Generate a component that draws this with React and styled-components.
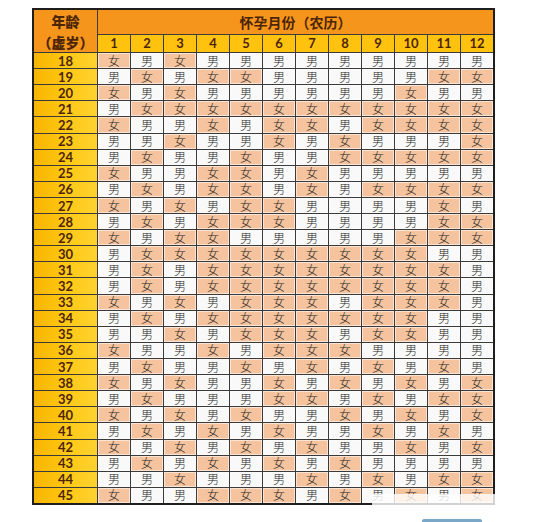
import styled, { createGlobalStyle } from "styled-components";

const GlobalStyle = createGlobalStyle`
  html, body {
    margin: 0;
    padding: 0;
    background: #ffffff;
  }
  body {
    font-family: "Noto Sans CJK SC", sans-serif;
  }
`;

const Page = styled.div`
  width: 552px;
  height: 522px;
  padding: 8px 0 0 32px;
  box-sizing: border-box;
  position: relative;
  overflow: hidden;
`;

const Grid = styled.div`
  display: grid;
  grid-template-columns: 63px repeat(12, minmax(0, 1fr));
  grid-template-rows: 24px 17px repeat(28, minmax(0, 1fr));
  width: 463px;
  height: 497px;
  box-sizing: border-box;
  gap: 1px;
  background: #3a3a3a;
  border: 2px solid #1e1e1e;
`;

const HeadCell = styled.div`
  display: flex;
  align-items: center;
  justify-content: center;
  background: ${(p) => (p.$num ? "#ffc30f" : "#f5951c")};
  color: #4d2504;
  font-family: Lato, "Noto Sans CJK SC", sans-serif;
  font-weight: 700;
  font-size: ${(p) => (p.$num ? "13px" : "14px")};
  grid-column: ${(p) => p.$col || "auto"};
  grid-row: ${(p) => p.$row || "auto"};
  line-height: 15px;
  text-align: center;
`;

const AgeHead = styled(HeadCell)`
  flex-direction: column;
  gap: 5px;
  font-family: "Noto Sans CJK SC", sans-serif;
  font-size: 14px;
  font-weight: 900;
  line-height: 16px;
`;

const AgeCell = styled.div`
  display: flex;
  align-items: center;
  justify-content: center;
  background: linear-gradient(90deg, #f7b500, #ffc814 50%, #ffd230);
  color: #4d2504;
  font-family: Lato, sans-serif;
  font-weight: 700;
  font-size: 13px;
  line-height: 14px;
`;

const Cell = styled.div`
  display: flex;
  align-items: center;
  justify-content: center;
  background: ${(p) => (p.$girl ? "#f5c39d" : "#f9f9f9")};
  box-shadow: inset 0 0 0 1px rgba(255, 255, 255, 0.55);
  color: #262626;
  font-family: "Noto Sans CJK SC", sans-serif;
  font-weight: 300;
  font-size: 12px;
  line-height: 14px;
`;

const Watermark = styled.div`
  position: absolute;
  left: 372px;
  top: 494px;
  width: 128px;
  height: 16px;
  background: rgba(255, 255, 255, 0.8);
`;

const BlueMark = styled.div`
  position: absolute;
  left: 422px;
  top: 519px;
  width: 60px;
  height: 3px;
  background: #7aa6c8;
  border-radius: 2px 2px 0 0;
`;

const data = {
  18: "女男女男男男男男男男男男",
  19: "男女男女女男男男男男女女",
  20: "女男女男男男男男男女男男",
  21: "男女女女女女女女女女女女",
  22: "女男男女男女女男女女女女",
  23: "男男女男男女男女男男男女",
  24: "男女男男女男男女女女女女",
  25: "女男男女女男女男男男男男",
  26: "男女男女女男女男女女女女",
  27: "女男女男女女男男男男女男",
  28: "男女男女女女男男男男女女",
  29: "女男女女男男男男男女女女",
  30: "男女女女女女女女女女男男",
  31: "男女男女女女女女女女女男",
  32: "男女男女女女女女女女女男",
  33: "女男女男女女女男女女女男",
  34: "男女男女女女女女女女男男",
  35: "男男女男女女女男女女男男",
  36: "女男男女男女女女男男男男",
  37: "男女男男女男女男女男女男",
  38: "女男女男男女男女男女男女",
  39: "男女男男男女女男女男女女",
  40: "女男女男女男男女男女男女",
  41: "男女男女男女男男女男女男",
  42: "女男女男女男女男男女男女",
  43: "男女男女男女男女男男男男",
  44: "男男女男男男女男女男女女",
  45: "女男男女女女男女男女男女",
};

const months = [1, 2, 3, 4, 5, 6, 7, 8, 9, 10, 11, 12];

export default function App() {
  return (
    <Page>
      <GlobalStyle />
      <Grid>
        <AgeHead $col="1" $row="1 / 3">
          <span>年龄</span>
          <span>（虚岁）</span>
        </AgeHead>
        <HeadCell $col="2 / 14" $row="1">
          怀孕月份（农历）
        </HeadCell>
        {months.map((m) => (
          <HeadCell key={m} $num>
            {m}
          </HeadCell>
        ))}
        {Object.keys(data).map((age) => [
          <AgeCell key={age}>{age}</AgeCell>,
          ...data[age].split("").map((ch, i) => (
            <Cell key={age + "-" + i} $girl={ch === "女"}>
              {ch}
            </Cell>
          )),
        ])}
      </Grid>
      <Watermark />
      <BlueMark />
    </Page>
  );
}
